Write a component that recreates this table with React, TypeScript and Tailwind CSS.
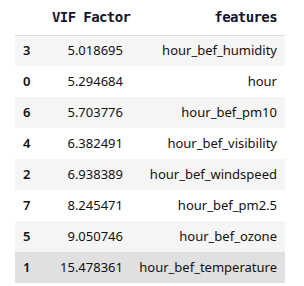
import React from 'react';

const rows: [string, string, string][] = [
    ['3', '5.018695', 'hour_bef_humidity'],
    ['0', '5.294684', 'hour'],
    ['6', '5.703776', 'hour_bef_pm10'],
    ['4', '6.382491', 'hour_bef_visibility'],
    ['2', '6.938389', 'hour_bef_windspeed'],
    ['7', '8.245471', 'hour_bef_pm2.5'],
    ['5', '9.050746', 'hour_bef_ozone'],
    ['1', '15.478361', 'hour_bef_temperature'],
];

const App: React.FC = () => {
    return (
        <div className="w-[304px] h-[286px] bg-white pl-[15px] font-['Noto_Sans','Noto_Sans_CJK_KR',sans-serif] text-[13px] text-[#111]">
            <table className="w-[270px] border-collapse table-fixed">
                <colgroup>
                    <col className="w-[37px]" />
                    <col className="w-[79px]" />
                    <col />
                </colgroup>
                <thead>
                    <tr className="h-[35px] border-b border-[#dcdcdc] font-['DejaVu_Sans_Mono',monospace] text-[14px] tracking-[-0.6px] font-bold text-[#14142b] whitespace-nowrap">
                        <th className="px-2"></th>
                        <th className="pl-0 pr-[9px] text-right">VIF Factor</th>
                        <th className="px-2 text-right">features</th>
                    </tr>
                </thead>
                <tbody>
                    {rows.map(([idx, vif, feat], i) => (
                        <tr
                            key={idx}
                            className={`h-[31px] ${i === rows.length - 1 ? 'bg-[#e0e0e0]' : i % 2 === 0 ? 'bg-[#f5f5f5]' : 'bg-white'}`}
                        >
                            <th className="px-2 text-left font-semibold">{idx}</th>
                            <td className="px-2 text-right whitespace-nowrap">{vif}</td>
                            <td className="px-2 text-right whitespace-nowrap">{feat}</td>
                        </tr>
                    ))}
                </tbody>
            </table>
        </div>
    );
};

export default App;
